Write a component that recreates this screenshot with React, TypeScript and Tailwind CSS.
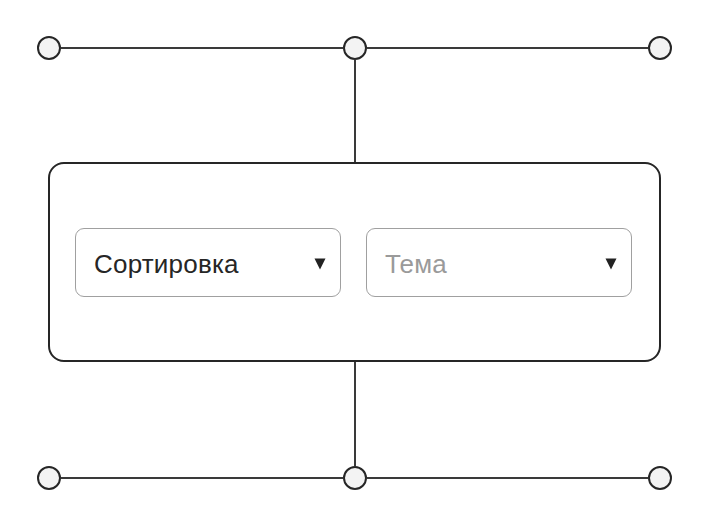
import React from "react";

function Node() {
  return <div className="w-6 h-6 shrink-0 rounded-full border-2 border-[#262626] bg-[#f3f3f3]" />;
}

function HLine() {
  return <div className="flex-1 h-[2px] bg-[#3a3a3a]" />;
}

function Row() {
  return (
    <div className="flex items-center">
      <Node />
      <HLine />
      <Node />
      <HLine />
      <Node />
    </div>
  );
}

function Caret() {
  return (
    <svg width="12" height="12" viewBox="0 0 12 12" className="shrink-0 mt-[4px]">
      <polygon points="0.5,0.5 11.5,0.5 6,11.5" fill="#222" />
    </svg>
  );
}

function Select({ label, placeholder }: { label: string; placeholder?: boolean }) {
  return (
    <div className="flex-1 h-[69px] rounded-[9px] border-[1.5px] border-[#a0a0a0] flex items-center justify-between pl-[18px] pr-[14px]">
      <span
        className={`text-[26px] leading-none pt-[4px] tracking-[0.2px] ${placeholder ? "text-[#9a9a9a]" : "text-[#262626]"}`}
      >
        {label}
      </span>
      <Caret />
    </div>
  );
}

export default function App() {
  return (
    <div
      className="w-[707px] h-[523px] bg-white pt-[36px] pl-[37px] pr-[35px]"
      style={{ fontFamily: '"Liberation Sans", Arial, sans-serif' }}
    >
      <Row />
      <div className="mx-auto w-[2px] h-[102px] bg-[#3a3a3a]" />
      <div className="ml-[11px] mr-[11px] h-[200px] rounded-[16px] border-2 border-[#262626] flex items-center gap-[25px] pl-[25px] pr-[27px]">
        <Select label="Сортировка" />
        <Select label="Тема" placeholder />
      </div>
      <div className="mx-auto w-[2px] h-[104px] bg-[#3a3a3a]" />
      <Row />
    </div>
  );
}
